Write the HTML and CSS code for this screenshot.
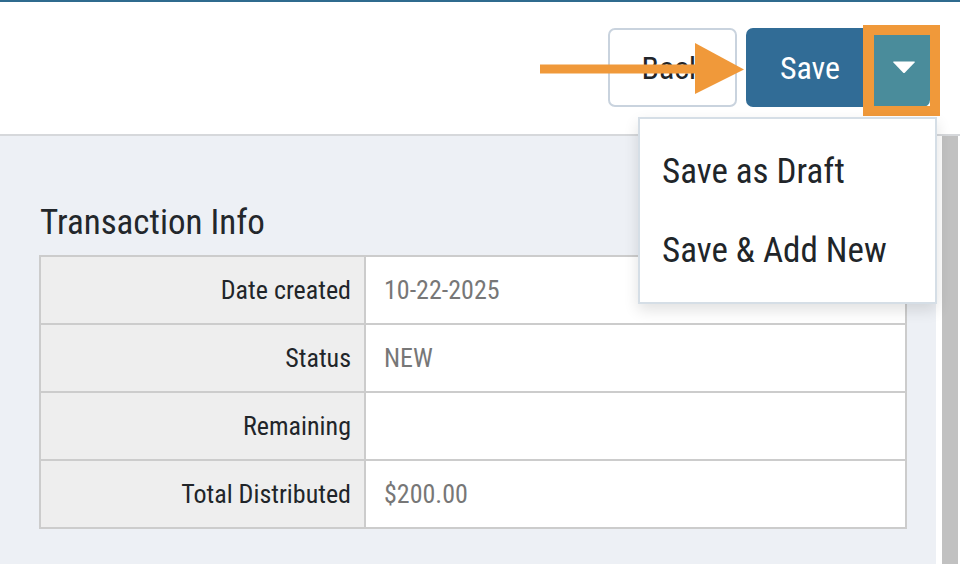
FILE: index.html
```html
<!DOCTYPE html>
<html lang="en">
<head>
<meta charset="utf-8">
<title>Transaction</title>
<link rel="stylesheet" href="styles.css">
</head>
<body>
<div class="topline"></div>
<header class="header">
  <div class="actions">
    <button class="btn btn-back">Back</button>
    <div class="split">
      <button class="btn btn-save">Save</button>
      <button class="btn btn-toggle" aria-label="More save options">
        <svg width="24" height="14" viewBox="0 0 24 14"><path d="M2 1.5 H22 Q23.5 1.5 22.6 2.6 L13 12.5 Q12 13.5 11 12.5 L1.4 2.6 Q0.5 1.5 2 1.5 Z" fill="#fff"/></svg>
      </button>
      <div class="highlight"></div>
      <ul class="menu">
        <li class="menu-item">Save as Draft</li>
        <li class="menu-item">Save &amp; Add New</li>
      </ul>
    </div>
  </div>
  <svg class="arrow" width="210" height="52" viewBox="0 0 210 52">
    <rect x="0" y="21.5" width="160" height="9" fill="#f0993a"/>
    <polygon points="155,0 204,26.5 155,51" fill="#f0993a"/>
  </svg>
</header>
<div class="body-row">
  <main class="main">
    <h2 class="title">Transaction Info</h2>
    <table class="info">
      <tr><th>Date created</th><td>10-22-2025</td></tr>
      <tr><th>Status</th><td>NEW</td></tr>
      <tr><th>Remaining</th><td></td></tr>
      <tr><th>Total Distributed</th><td>$200.00</td></tr>
    </table>
  </main>
  <div class="scroll">
    <div class="thumb"></div>
  </div>
</div>
</body>
</html>
```
FILE: styles.css
```css
* { box-sizing: border-box; }
html, body { margin: 0; padding: 0; height: 100%; }
body {
  font-family: "Roboto Condensed", Roboto, "Liberation Sans", sans-serif;
  color: #212529;
  background: #fff;
  display: flex;
  flex-direction: column;
  overflow: hidden;
}
.topline { height: 2px; background: #2f6b8e; flex: none; }
.header {
  position: relative;
  height: 134px;
  flex: none;
  background: #fff;
  border-bottom: 2px solid #d6d8db;
  display: flex;
  justify-content: flex-end;
  align-items: flex-start;
  padding: 26px 30px 0 0;
}
.actions { display: flex; gap: 9px; }
.btn {
  font-family: inherit;
  font-size: 32px;
  height: 79px;
  border: none;
  margin: 0;
  padding: 0;
  cursor: pointer;
}
.btn-back {
  width: 129px;
  margin-left: -1px;
  background: #fff;
  color: #212529;
  border: 2px solid #c9d3de;
  border-radius: 7px;
}
.split { position: relative; display: flex; }
.btn-save {
  width: 128px;
  background: #316c96;
  color: #fff;
  border-radius: 7px 0 0 7px;
}
.btn-toggle {
  width: 56px;
  background: #4a8c9b;
  border-radius: 0 7px 7px 0;
  display: flex;
  align-items: center;
  justify-content: center;
  padding-left: 4px;
  padding-bottom: 2px;
}
.highlight {
  position: absolute;
  left: 117px;
  top: -3px;
  width: 77px;
  height: 91px;
  border: 10px solid #f0993a;
  border-left-width: 11px;
}
.menu {
  position: absolute;
  left: -108px;
  top: 89px;
  width: 299px;
  margin: 0;
  padding: 13px 0 12px;
  list-style: none;
  background: #fff;
  border: 2px solid #d5dee6;
  box-shadow: 0 6px 14px rgba(0, 0, 0, 0.12);
  z-index: 2;
}
.menu-item {
  height: 79px;
  line-height: 79px;
  padding-left: 22px;
  font-size: 35px;
  color: #212529;
  white-space: nowrap;
}
.arrow {
  position: absolute;
  left: 540px;
  top: 41px;
}
.body-row { flex: 1; display: flex; min-height: 0; }
.main {
  flex: 1;
  background: #edf0f5;
  padding: 66px 29px 0 39px;
}
.title {
  margin: 0 0 12px 1px;
  font-size: 35px;
  line-height: 41px;
  font-weight: 400;
  color: #23272b;
}
.info {
  width: 868px;
  border-collapse: collapse;
  border: 2px solid #cccccc;
  font-size: 26px;
}
.info th, .info td {
  border: 2px solid #cccccc;
  height: 68px;
  vertical-align: middle;
  padding: 0;
}
.info th {
  width: 325px;
  background: #eeeeee;
  text-align: right;
  font-weight: 400;
  color: #212529;
  padding-right: 13px;
}
.info td {
  background: #fff;
  color: #777;
  padding-left: 18px;
}
.scroll {
  width: 24px;
  flex: none;
  background: #fff;
  padding: 0 2px 0 6px;
}
.thumb { height: 100%; background: #c1c1c1; }
```
